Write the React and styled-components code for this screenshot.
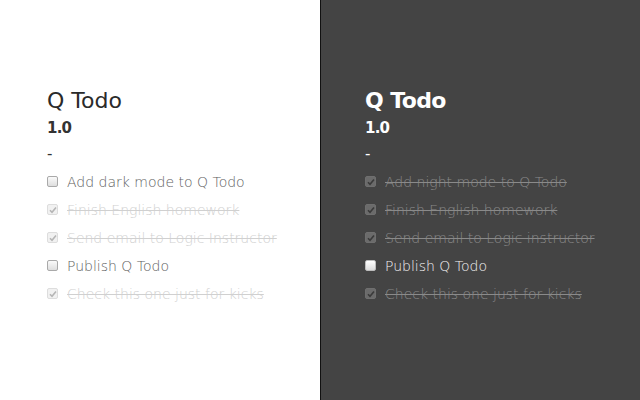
import React from "react";
import styled, { createGlobalStyle } from "styled-components";

const Global = createGlobalStyle`
  html, body { margin: 0; padding: 0; }
  body {
    font-family: "DejaVu Sans", "Noto Sans", sans-serif;
    width: 640px;
    height: 400px;
    overflow: hidden;
  }
`;

const Page = styled.div`
  display: grid;
  grid-template-columns: 320px 320px;
  height: 400px;
`;

const Panel = styled.section`
  background: ${(p) => (p.dark ? "#444444" : "#ffffff")};
  border-left: ${(p) => (p.dark ? "1px solid #111" : "none")};
  padding: 86px 0 0 ${(p) => (p.dark ? "44px" : "47px")};
  color: ${(p) => (p.dark ? "#ffffff" : "#333333")};
`;

const Title = styled.h1`
  margin: 0;
  font-size: 22px;
  font-weight: ${(p) => (p.dark ? 700 : 400)};
  line-height: 30px;
  letter-spacing: ${(p) => (p.dark ? "-0.6px" : "0")};
  color: ${(p) => (p.dark ? "#ffffff" : "#2a2a2a")};
`;

const Version = styled.div`
  font-size: 15px;
  font-weight: 700;
  line-height: 25px;
  letter-spacing: -0.8px;
`;

const Dash = styled.div`
  font-size: 15px;
  line-height: 26px;
  margin-bottom: 4px;
`;

const List = styled.ul`
  list-style: none;
  margin: 0;
  padding: 0;
  display: flex;
  flex-direction: column;
  gap: 7px;
`;

const Item = styled.li`
  display: flex;
  align-items: center;
  gap: 9px;
  height: 21px;
  font-size: 14px;
  font-weight: 300;
  color: ${(p) =>
    p.done ? (p.dark ? "#8a8a8a" : "#d0d0d0") : p.dark ? "#f2f2f2" : "#5e5e5e"};
  text-decoration: ${(p) => (p.done ? "line-through" : "none")};
`;

const Box = styled.span`
  flex: none;
  width: 11px;
  height: 11px;
  border-radius: 2px;
  box-sizing: border-box;
  display: inline-flex;
  align-items: center;
  justify-content: center;
  border: 1px solid
    ${(p) =>
      p.dark ? (p.done ? "#6f6f6f" : "#bdbdbd") : p.done ? "#dddddd" : "#a9a9a9"};
  background: ${(p) =>
    p.dark
      ? p.done
        ? "#6b6b6b"
        : "linear-gradient(#ffffff, #dcdcdc)"
      : p.done
      ? "#f1f1f1"
      : "linear-gradient(#fafafa, #dedede)"};
`;

const Check = ({ color }) => (
  <svg width="8" height="8" viewBox="0 0 8 8">
    <path d="M1 4.2 L3 6.2 L7 1.5" fill="none" stroke={color} strokeWidth="1.6" />
  </svg>
);

const Todo = ({ text, done, dark }) => (
  <Item done={done} dark={dark}>
    <Box done={done} dark={dark}>
      {done && <Check color={dark ? "#3a3a3a" : "#b5b5b5"} />}
    </Box>
    {text}
  </Item>
);

const lightTodos = [
  ["Add dark mode to Q Todo", false],
  ["Finish English homework", true],
  ["Send email to Logic Instructor", true],
  ["Publish Q Todo", false],
  ["Check this one just for kicks", true],
];

const darkTodos = [
  ["Add night mode to Q Todo", true],
  ["Finish English homework", true],
  ["Send email to Logic instructor", true],
  ["Publish Q Todo", false],
  ["Check this one just for kicks", true],
];

const Column = ({ dark, todos }) => (
  <Panel dark={dark}>
    <Title dark={dark}>Q Todo</Title>
    <Version>1.0</Version>
    <Dash>-</Dash>
    <List>
      {todos.map(([t, d]) => (
        <Todo key={t} text={t} done={d} dark={dark} />
      ))}
    </List>
  </Panel>
);

export default function App() {
  return (
    <>
      <Global />
      <Page>
        <Column todos={lightTodos} />
        <Column dark todos={darkTodos} />
      </Page>
    </>
  );
}
